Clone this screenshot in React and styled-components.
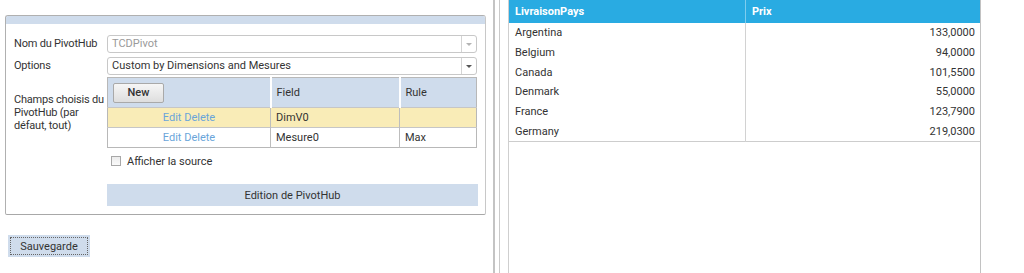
import React from 'react';
import styled, { createGlobalStyle } from 'styled-components';

const GlobalStyle = createGlobalStyle`
  body {
    margin: 0;
    font-family: Roboto, "Liberation Sans", Arial, sans-serif;
    font-size: 11px;
    color: #333;
    background: #fff;
  }
`;

const Page = styled.div`
  display: flex;
  height: 273px;
  overflow: hidden;
`;

const LeftPane = styled.div`
  width: 493px;
  flex-shrink: 0;
  padding: 15px 0 0 5px;
  box-sizing: border-box;
`;

const Panel = styled.div`
  width: 481px;
  box-sizing: border-box;
  border: 1px solid #b0b0b0;
  border-right-color: #c8c8c8;
  border-bottom-color: #a8a8a8;
  border-radius: 3px 3px 2px 2px;
  padding-bottom: 8px;
`;

const PanelBand = styled.div`
  height: 8px;
  background: #cfdcec;
  border-radius: 2px 2px 0 0;
`;

const PanelBody = styled.div`
  display: flex;
  flex-direction: column;
  padding: 0 8px;
`;

const FormRow = styled.div`
  display: grid;
  grid-template-columns: 93px 370px;
  margin-top: ${p => p.$top}px;
`;

const Label = styled.div`
  width: 92px;
  letter-spacing: -0.2px;
  padding-top: ${p => p.$pad || 0}px;
  line-height: ${p => (p.$pad ? '13px' : '18px')};
  color: #333;
`;

const Select = styled.div`
  display: flex;
  height: 18px;
  box-sizing: border-box;
  border: 1px solid #c8c8c8;
  border-radius: 3px;
  background: #fff;
`;

const SelectText = styled.div`
  flex: 1;
  padding-left: 4px;
  line-height: 16px;
  color: ${p => (p.$disabled ? '#9a9a9a' : '#333')};
`;

const SelectArrow = styled.div`
  width: 14px;
  border-left: 1px solid #d4d4d4;
  display: flex;
  align-items: center;
  justify-content: center;

  &::after {
    content: '';
    border-left: 3px solid transparent;
    border-right: 3px solid transparent;
    border-top: 3px solid ${p => (p.$disabled ? '#b4b4b4' : '#555')};
  }
`;

const Grid = styled.table`
  width: 370px;
  border-collapse: collapse;
  border: 1px solid #b8b8b8;
  table-layout: fixed;
`;

const HeadCell = styled.th`
  height: 29px;
  background: #cfdcec;
  font-weight: normal;
  text-align: left;
  padding: 0 0 0 ${p => p.$pad ?? 5}px;
  border-left: 2px solid #fff;
  &:first-child {
    border-left: none;
  }
`;

const Row = styled.tr`
  background: ${p => (p.$selected ? '#f9ecb7' : '#fff')};
`;

const Cell = styled.td`
  height: 19px;
  padding: 0 0 0 5px;
  border-top: 1px solid #c6c6c6;
  border-left: 1px solid #bdbdbd;
  text-align: ${p => p.$align || 'left'};
  &:first-child {
    border-left: none;
    padding: 0;
  }
`;

const Link = styled.span`
  color: #6aa5da;
`;

const NewButton = styled.button`
  width: 51px;
  height: 20px;
  margin-left: 5px;
  font-family: inherit;
  font-size: 11px;
  font-weight: 500;
  color: #333;
  border: 1px solid #a9a9a9;
  border-radius: 2px;
  background: linear-gradient(#f6f6f6, #dedede);
  padding: 0;
`;

const CheckRow = styled.div`
  display: flex;
  align-items: center;
  gap: 6px;
  margin: 7px 0 0 97px;
  height: 12px;
`;

const CheckBox = styled.span`
  width: 10px;
  height: 10px;
  box-sizing: border-box;
  border: 1px solid #a8a8a8;
  background: linear-gradient(#ececec, #fafafa);
`;

const EditionBand = styled.div`
  margin: 17px 0 0 93px;
  width: 371px;
  height: 22px;
  background: #cfdcec;
  display: flex;
  align-items: center;
  justify-content: center;
`;

const SaveButton = styled.button`
  margin: 20px 0 0 3px;
  width: 82px;
  height: 22px;
  padding: 0;
  font-family: inherit;
  font-size: 11px;
  color: #333;
  background: #cfdcec;
  border: none;
  position: relative;

  &::after {
    content: '';
    position: absolute;
    inset: 2px;
    border: 1px dotted #666;
  }
`;

const Splitter = styled.div`
  width: 7px;
  flex-shrink: 0;
  box-sizing: border-box;
  border-left: 2px solid #c4c4c4;
  border-right: 1px solid #cacaca;
`;

const RightPane = styled.div`
  padding-left: 8px;
  display: flex;
`;

const DataGrid = styled.div`
  width: 473px;
  height: 100%;
  box-sizing: border-box;
  border-left: 1px solid #cfcfcf;
  border-right: 1px solid #c2c2c2;
`;

const DataTable = styled.table`
  width: 100%;
  border-collapse: collapse;
  table-layout: fixed;
  border-bottom: 1px solid #cdcdcd;
`;

const DataHead = styled.th`
  height: 23px;
  background: #29abe2;
  color: #fff;
  font-weight: bold;
  text-align: left;
  padding: 0 0 0 ${p => p.$pad}px;
  width: ${p => p.$w || 'auto'};
  & + & {
    border-left: 1px solid #7fcdee;
  }
`;

const DataCell = styled.td`
  height: 19.7px;
  padding: 0 ${p => (p.$right ? '5px' : '0')} 0 ${p => (p.$right ? '0' : '6px')};
  text-align: ${p => (p.$right ? 'right' : 'left')};
  color: #333;
  & + & {
    border-left: 1px solid #d2d2d2;
  }
`;

const countries = [
  ['Argentina', '133,0000'],
  ['Belgium', '94,0000'],
  ['Canada', '101,5500'],
  ['Denmark', '55,0000'],
  ['France', '123,7900'],
  ['Germany', '219,0300'],
];

const App = () => {
  return (
    <Page>
      <GlobalStyle />
      <LeftPane>
        <Panel>
          <PanelBand />
          <PanelBody>
            <FormRow $top={11}>
              <Label>Nom du PivotHub</Label>
              <Select>
                <SelectText $disabled>TCDPivot</SelectText>
                <SelectArrow $disabled />
              </Select>
            </FormRow>
            <FormRow $top={4}>
              <Label>Options</Label>
              <Select>
                <SelectText>Custom by Dimensions and Mesures</SelectText>
                <SelectArrow />
              </Select>
            </FormRow>
            <FormRow $top={2}>
              <Label $pad={16}>Champs choisis du PivotHub (par défaut, tout)</Label>
              <Grid>
                <colgroup>
                  <col style={{ width: '163px' }} />
                  <col style={{ width: '129px' }} />
                  <col />
                </colgroup>
                <thead>
                  <tr>
                    <HeadCell $pad={0}><NewButton>New</NewButton></HeadCell>
                    <HeadCell>Field</HeadCell>
                    <HeadCell>Rule</HeadCell>
                  </tr>
                </thead>
                <tbody>
                  <Row $selected>
                    <Cell $align="center"><Link>Edit Delete</Link></Cell>
                    <Cell>DimV0</Cell>
                    <Cell></Cell>
                  </Row>
                  <Row>
                    <Cell $align="center"><Link>Edit Delete</Link></Cell>
                    <Cell>Mesure0</Cell>
                    <Cell>Max</Cell>
                  </Row>
                </tbody>
              </Grid>
            </FormRow>
            <CheckRow>
              <CheckBox />
              <span>Afficher la source</span>
            </CheckRow>
            <EditionBand>Edition de PivotHub</EditionBand>
          </PanelBody>
        </Panel>
        <SaveButton>Sauvegarde</SaveButton>
      </LeftPane>
      <Splitter />
      <RightPane>
        <DataGrid>
          <DataTable>
            <thead>
              <tr>
                <DataHead $pad={6} $w="230px">LivraisonPays</DataHead>
                <DataHead $pad={6}>Prix</DataHead>
              </tr>
            </thead>
            <tbody>
              {countries.map(([name, price]) => (
                <tr key={name}>
                  <DataCell>{name}</DataCell>
                  <DataCell $right>{price}</DataCell>
                </tr>
              ))}
            </tbody>
          </DataTable>
        </DataGrid>
      </RightPane>
    </Page>
  );
};

export default App;
